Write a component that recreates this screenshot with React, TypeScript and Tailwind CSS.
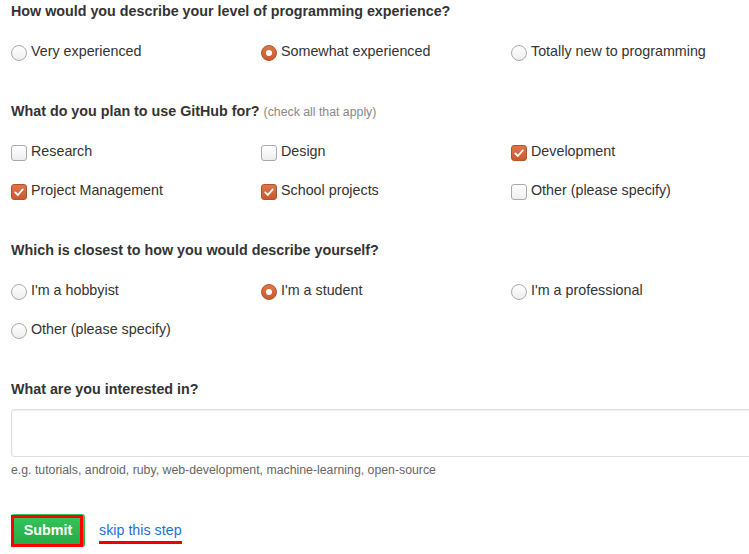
import { useState } from "react";

type Option = { label: string; checked?: boolean };

function Radio({ checked }: { checked?: boolean }) {
  if (checked) {
    return (
      <span className="mr-1 flex h-4 w-4 shrink-0 items-center justify-center rounded-full border border-[#b2532a] bg-gradient-to-b from-[#e0744a] to-[#c75a30]">
        <span className="h-[6px] w-[6px] rounded-full bg-white" />
      </span>
    );
  }
  return (
    <span className="mr-1 h-4 w-4 shrink-0 rounded-full border border-[#aaa] bg-gradient-to-b from-white to-[#eee]" />
  );
}

function Checkbox({ checked }: { checked?: boolean }) {
  if (checked) {
    return (
      <span className="mr-1 flex h-4 w-4 shrink-0 items-center justify-center rounded-[3px] border border-[#b2532a] bg-gradient-to-b from-[#e0744a] to-[#c75a30]">
        <svg viewBox="0 0 16 16" className="h-3 w-3">
          <path
            d="M3 8.5 L6.5 12 L13 4.5"
            fill="none"
            stroke="white"
            strokeWidth="2.4"
            strokeLinecap="round"
            strokeLinejoin="round"
          />
        </svg>
      </span>
    );
  }
  return (
    <span className="mr-1 h-4 w-4 shrink-0 rounded-[3px] border border-[#aaa] bg-gradient-to-b from-white to-[#eee]" />
  );
}

function OptionGrid({ items, type }: { items: Option[]; type: "radio" | "check" }) {
  return (
    <div className="mt-5 grid grid-cols-[250px_250px_250px] gap-y-[19px]">
      {items.map((o) => (
        <label key={o.label} className="flex h-5 items-center text-[14.3px] leading-5 text-[#333]">
          <span className="mt-[3px] flex">
            {type === "radio" ? <Radio checked={o.checked} /> : <Checkbox checked={o.checked} />}
          </span>
          {o.label}
        </label>
      ))}
    </div>
  );
}

export default function App() {
  const [interests, setInterests] = useState("");

  return (
    <div className="h-[554px] w-[749px] overflow-hidden bg-white pl-[11px] pt-[1px] font-['Liberation_Sans',Arial,sans-serif]">
      <section className="mb-10">
        <h3 className="h-5 text-[14.3px] font-bold leading-5 text-[#333]">
          How would you describe your level of programming experience?
        </h3>
        <OptionGrid
          type="radio"
          items={[
            { label: "Very experienced" },
            { label: "Somewhat experienced", checked: true },
            { label: "Totally new to programming" },
          ]}
        />
      </section>

      <section className="mb-10">
        <h3 className="h-5 text-[14.3px] font-bold leading-5 text-[#333]">
          What do you plan to use GitHub for?{" "}
          <span className="text-[12.3px] font-normal leading-none text-[#888]">(check all that apply)</span>
        </h3>
        <OptionGrid
          type="check"
          items={[
            { label: "Research" },
            { label: "Design" },
            { label: "Development", checked: true },
            { label: "Project Management", checked: true },
            { label: "School projects", checked: true },
            { label: "Other (please specify)" },
          ]}
        />
      </section>

      <section className="mb-10">
        <h3 className="h-5 text-[14.3px] font-bold leading-5 text-[#333]">
          Which is closest to how you would describe yourself?
        </h3>
        <OptionGrid
          type="radio"
          items={[
            { label: "I'm a hobbyist" },
            { label: "I'm a student", checked: true },
            { label: "I'm a professional" },
            { label: "Other (please specify)" },
          ]}
        />
      </section>

      <section>
        <h3 className="h-5 text-[14.3px] font-bold leading-5 text-[#333]">What are you interested in?</h3>
        <textarea
          value={interests}
          onChange={(e) => setInterests(e.target.value)}
          className="mt-[10px] block h-12 w-[800px] resize-none rounded-[3px] border border-[#ddd] px-2 text-[14px] shadow-[inset_0_1px_2px_rgba(0,0,0,0.075)] outline-none"
        />
        <p className="mt-[5px] text-[12.3px] leading-4 text-[#666]">
          e.g. tutorials, android, ruby, web-development, machine-learning, open-source
        </p>
        <div className="mt-9 flex items-center">
          <button className="relative flex h-[33px] w-[74px] items-center justify-center rounded-[3px] bg-gradient-to-b from-[#34c85a] to-[#28a745] text-[14.3px] font-bold text-white">
            Submit
            <span className="absolute bottom-0 left-0 right-[2px] top-[1px] border-[3px] border-[#f00]" />
          </button>
          <a href="#" className="ml-[14px] mt-[2px] border-b-[3px] border-[#e00] pb-[1px] text-[14.3px] leading-5 text-[#1f6fd6]">
            skip this step
          </a>
        </div>
      </section>
    </div>
  );
}
